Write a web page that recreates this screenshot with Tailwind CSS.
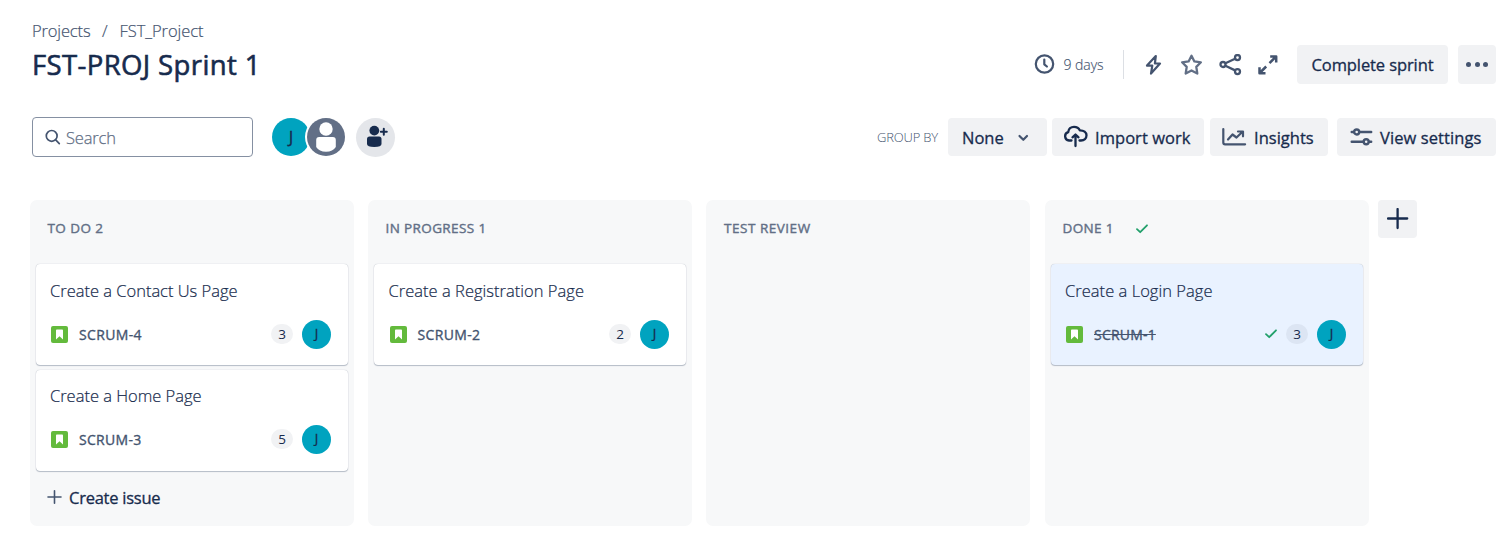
<!DOCTYPE html>
<html lang="en">
<head>
<meta charset="utf-8">
<title>FST-PROJ Sprint 1</title>
<script src="https://cdn.jsdelivr.net/npm/@tailwindcss/browser@4"></script>
</head>
<body class="h-[555px] overflow-hidden bg-white font-['Open_Sans','Noto_Sans',sans-serif] text-[#172b4d]">
<svg class="hidden">
  <symbol id="story" viewBox="0 0 17 17"><rect width="17" height="17" rx="2" fill="#63ba3c"/><path d="M5 4.400a.8.8 0 0 1 .8-.8h5.400a.8.8 0 0 1 .8.8v9.200l-3.500-3.400L5 13.600z" fill="#fff"/></symbol>
  <symbol id="check" viewBox="0 0 12 10"><path d="M1 5.200l3.200 3L11 1.300" fill="none" stroke="#22a06b" stroke-width="1.800" stroke-linecap="round" stroke-linejoin="round"/></symbol>
</svg>

<header class="pl-8 pr-[10px] pt-5">
  <nav class="flex h-[22px] items-center text-[16.5px] font-light leading-[22px] text-[#44546f] [-webkit-text-stroke:0.2px]">
    <a class="w-[70px] tracking-[-0.137px]">Projects</a><span class="w-[17.5px]">/</span><a class="tracking-[-0.057px]">FST_Project</a>
  </nav>
  <div class="mt-[3px] flex h-[39px] items-center justify-between">
    <h1 class="text-[27.5px] leading-[39px] tracking-[0.38px] [-webkit-text-stroke:0.6px]">FST-PROJ Sprint 1</h1>
    <div class="flex items-center text-[#44546f]">
      <svg class="h-[21px] w-[21px]" viewBox="0 0 21 21" fill="none" stroke="currentColor" stroke-width="2.200"><circle cx="10.500" cy="10" r="8.700"/><path d="M10.300 5.500v4.800l2.600 2.200" stroke-linecap="round" stroke-linejoin="round"/></svg>
      <span class="ml-[9px] w-[41px] whitespace-nowrap pt-px text-sm font-light tracking-[-0.055px] [-webkit-text-stroke:0.15px]">9 days</span>
      <span class="ml-[18px] h-[29px] w-px bg-[#dcdfe4]"></span>
      <svg class="ml-[21px] h-[22px] w-[17px]" viewBox="0 0 17 22" fill="none" stroke="currentColor" stroke-width="2.200" stroke-linejoin="round"><path d="M10.800 2L2 11.600h5.300L6 19.600 15 9.500H9.900z"/></svg>
      <svg class="ml-[18px] h-[22px] w-[23px]" viewBox="0 0 23 22" fill="none" stroke="#626f86" stroke-width="2.300" stroke-linejoin="round"><path d="M11.500 1.700l2.900 5.700 6.500.900-4.600 4.600 1 6.600-5.800-3-5.800 3 1-6.600L2.100 8.300l6.500-.900z"/></svg>
      <svg class="ml-[16px] h-[22px] w-[23px]" viewBox="0 0 23 22" fill="none" stroke="currentColor" stroke-width="2.300"><circle cx="4" cy="10.500" r="2.500"/><circle cx="18.500" cy="3.600" r="2.500"/><circle cx="18.500" cy="17.600" r="2.500"/><path d="M6.400 9.300l9.700-4.600M6.400 11.700l9.700 4.700"/></svg>
      <svg class="ml-[15px] h-[22px] w-[22px]" viewBox="0 0 22 22" fill="none" stroke="currentColor" stroke-width="2.500" stroke-linejoin="round"><path d="M13.200 2.400h6v6M19 2.600l-6.500 6.500M8.500 19.200h-6v-6M2.700 19l6.500-6.500"/></svg>
      <button class="ml-[18.500px] h-[39px] w-[151px] rounded-[4px] bg-[#f1f2f4] pt-px text-[16.5px] tracking-[-0.095px] text-[#172b4d] [-webkit-text-stroke:0.3px]">Complete sprint</button>
      <button class="ml-[10px] flex h-[39px] w-[38px] items-center justify-center gap-[3.500px] rounded-[4px] bg-[#f1f2f4]"><i class="size-[5px] rounded-full bg-[#44546f]"></i><i class="size-[5px] rounded-full bg-[#44546f]"></i><i class="size-[5px] rounded-full bg-[#44546f]"></i></button>
    </div>
  </div>
</header>

<section class="mt-[33px] flex h-10 items-center justify-between pl-8 pr-[10px]">
  <div class="flex items-center">
    <label class="flex h-10 w-[221px] items-center rounded-[4px] border border-[#8590a2] pl-3">
      <svg class="size-4 text-[#44546f]" viewBox="0 0 16 16" fill="none" stroke="currentColor" stroke-width="1.700" stroke-linecap="round"><circle cx="6.700" cy="6.900" r="5.400"/><path d="M10.700 10.900l3.600 3.700"/></svg>
      <span class="ml-[5px] pt-[2px] text-[16.5px] font-light tracking-[-0.170px] text-[#626f86] [-webkit-text-stroke:0.25px]">Search</span>
    </label>
    <span class="ml-[19px] flex size-[38px] items-center justify-center rounded-full bg-[#00a3bf] text-[17px] [-webkit-text-stroke:0.3px]">J</span>
    <svg class="-ml-[5px] size-[42px]" viewBox="0 0 42 42"><circle cx="21" cy="21" r="21" fill="#fff"/><circle cx="21" cy="21" r="19" fill="#626f86"/><circle cx="21" cy="13" r="6.700" fill="#fff"/><path d="M11.200 24q0-3 3-3h13.600q3 0 3 3V31q-3 4.800-9.800 4.800t-9.800-4.800z" fill="#fff"/></svg>
    <span class="ml-[9px] flex size-[39px] items-center justify-center rounded-full bg-[#e4e6ea]"><svg class="h-[24px] w-[24px]" viewBox="0 0 24 24" fill="#172b4d"><circle cx="10.300" cy="5.600" r="4.900"/><path d="M3 14q0-2.500 2.500-2.500h9.500q2.500 0 2.500 2.500v5q0 3-7.250 3T3 19z"/><path d="M19.800 3.800v6M16.800 6.800h6" stroke="#172b4d" stroke-width="2" stroke-linecap="round"/></svg></span>
  </div>
  <div class="flex items-center text-[16.5px]">
    <span class="w-[71px] pt-px text-[13px] font-light tracking-[-0.176px] text-[#44546f]">GROUP BY</span>
    <button class="flex h-[38px] w-[99px] items-center rounded-[4px] bg-[#f1f2f4] pl-[14px]"><span class="w-[55px] pt-[2px] text-left [-webkit-text-stroke:0.3px]">None</span><svg class="mt-px h-[8px] w-[12px]" viewBox="0 0 12 8" fill="none" stroke="#44546f" stroke-width="2.200" stroke-linecap="round" stroke-linejoin="round"><path d="M2.500 2L6.300 5.800 10 2"/></svg></button>
    <button class="ml-[5px] flex h-[38px] w-[152px] items-center rounded-[4px] bg-[#f1f2f4] pl-[11px]"><svg class="mr-[7px] h-[24px] w-[25px]" viewBox="0 0 25 24" fill="none" stroke="#172b4d" stroke-width="2.300" stroke-linecap="round" stroke-linejoin="round"><path d="M8.500 15.500H6a4.300 4.300 0 0 1-.8-8.400C5.500 3.800 8 1.800 11 1.800c2.700 0 4.800 1.300 5.800 3.500 4-.1 6.700 1.900 6.700 5 0 3.100-2.300 5.200-5.500 5.200h-1.500M12.500 21V10M9.500 12.300l3-2.800 3 2.800"/></svg><span class="pt-[2px] tracking-[0.050px] [-webkit-text-stroke:0.3px]">Import work</span></button>
    <button class="ml-[6px] flex h-[38px] w-[118px] items-center rounded-[4px] bg-[#f1f2f4] pl-[12px]"><svg class="mr-[7px] h-[20px] w-[25px]" viewBox="0 0 25 20" fill="none" stroke="#44546f" stroke-width="2.200" stroke-linecap="round" stroke-linejoin="round"><path d="M1.300 2v13.500q0 1.800 1.800 1.800h20"/><path d="M6 12.500l4.500-5 4 3 6-5.800M16 4.500h5v4.800"/></svg><span class="pt-[2px] tracking-[0.020px] [-webkit-text-stroke:0.3px]">Insights</span></button>
    <button class="ml-[9px] flex h-[38px] w-[159px] items-center rounded-[4px] bg-[#f1f2f4] pl-[12px]"><svg class="mr-[7px] h-[20px] w-[24px]" viewBox="0 0 24 20" fill="none" stroke="#44546f" stroke-width="2.400" stroke-linecap="round"><path d="M2.700 5h2M10.500 5h11.700M2.700 14.700h11.300M20 14.700h2.200"/><circle cx="7.700" cy="5" r="2.500"/><circle cx="17.200" cy="14.700" r="2.500"/></svg><span class="pt-[2px] tracking-[0.089px] [-webkit-text-stroke:0.3px]">View settings</span></button>
  </div>
</section>

<main class="mt-[43px] flex pl-[30px]">
  <section class="h-[326px] w-[324px] rounded-[7px] bg-[#f7f8f9] px-[6px]">
    <h2 class="flex h-16 items-center pb-[7px] pl-[11.500px] text-[13.5px] tracking-[0.433px] text-[#626f86] [-webkit-text-stroke:0.4px]">TO DO 2</h2>
    <article class="h-[101px] rounded-[4px] bg-white pl-[14px] pr-[17px] pt-[15px] shadow-[0_1px_1px_#091e4240,0_0_1px_#091e424f]">
      <p class="h-6 text-[16.5px] font-light leading-6 tracking-[-0.012px] [-webkit-text-stroke:0.2px]">Create a Contact Us Page</p>
      <div class="mt-4 flex h-[30px] items-center"><svg class="ml-px size-[17px]"><use href="#story"/></svg><span class="ml-[11px] pt-[2px] text-sm tracking-[0.364px] text-[#44546f] [-webkit-text-stroke:0.35px]">SCRUM-4</span><span class="ml-auto flex h-5 w-[22px] items-center justify-center rounded-full bg-[#f1f2f4] pt-px text-[13.5px]">3</span><span class="ml-[9px] flex size-[29px] items-center justify-center rounded-full bg-[#00a3bf] text-[13px] [-webkit-text-stroke:0.3px]">J</span></div>
    </article>
    <article class="mt-[5px] h-[101px] rounded-[4px] bg-white pl-[14px] pr-[17px] pt-[14px] shadow-[0_1px_1px_#091e4240,0_0_1px_#091e424f]">
      <p class="h-6 text-[16.5px] font-light leading-6 tracking-[-0.021px] [-webkit-text-stroke:0.2px]">Create a Home Page</p>
      <div class="mt-4 flex h-[30px] items-center"><svg class="ml-px size-[17px]"><use href="#story"/></svg><span class="ml-[11px] pt-[2px] text-sm tracking-[0.3px] text-[#44546f] [-webkit-text-stroke:0.35px]">SCRUM-3</span><span class="ml-auto flex h-5 w-[22px] items-center justify-center rounded-full bg-[#f1f2f4] pt-px text-[13.5px]">5</span><span class="ml-[9px] flex size-[29px] items-center justify-center rounded-full bg-[#00a3bf] text-[13px] [-webkit-text-stroke:0.3px]">J</span></div>
    </article>
    <button class="mt-[14px] flex h-6 items-center pl-[11px] text-[16.5px] leading-6"><svg class="mr-[7px] size-[15px]" viewBox="0 0 15 15" fill="none" stroke="#44546f" stroke-width="1.600" stroke-linecap="round"><path d="M7.500 .8v12.500M1 7h13"/></svg><span class="pt-[2px] tracking-[-0.250px] [-webkit-text-stroke:0.3px]">Create issue</span></button>
  </section>

  <section class="ml-[14px] h-[326px] w-[324px] rounded-[7px] bg-[#f7f8f9] px-[6px]">
    <h2 class="flex h-16 items-center pb-[7px] pl-[11.500px] text-[13.5px] tracking-[0.379px] text-[#626f86] [-webkit-text-stroke:0.4px]">IN PROGRESS 1</h2>
    <article class="h-[101px] rounded-[4px] bg-white pl-[14.500px] pr-[17px] pt-[15px] shadow-[0_1px_1px_#091e4240,0_0_1px_#091e424f]">
      <p class="h-6 text-[16.5px] font-light leading-6 tracking-[0.023px] [-webkit-text-stroke:0.2px]">Create a Registration Page</p>
      <div class="mt-4 flex h-[30px] items-center"><svg class="ml-px size-[17px]"><use href="#story"/></svg><span class="ml-[11px] pt-[2px] text-sm tracking-[0.364px] text-[#44546f] [-webkit-text-stroke:0.35px]">SCRUM-2</span><span class="ml-auto flex h-5 w-[22px] items-center justify-center rounded-full bg-[#f1f2f4] pt-px text-[13.5px]">2</span><span class="ml-[9px] flex size-[29px] items-center justify-center rounded-full bg-[#00a3bf] text-[13px] [-webkit-text-stroke:0.3px]">J</span></div>
    </article>
  </section>

  <section class="ml-[14px] h-[326px] w-[324px] rounded-[7px] bg-[#f7f8f9] px-[6px]">
    <h2 class="flex h-16 items-center pb-[7px] pl-[12px] text-[13.5px] tracking-[0.520px] text-[#626f86] [-webkit-text-stroke:0.4px]">TEST REVIEW</h2>
  </section>

  <section class="ml-[15px] h-[326px] w-[324px] rounded-[7px] bg-[#f7f8f9] px-[6px]">
    <h2 class="flex h-16 items-center pb-[7px] pl-[11.500px] text-[13.5px] tracking-[0.350px] text-[#626f86] [-webkit-text-stroke:0.4px]">DONE 1<svg class="ml-[22px] mt-px h-[10px] w-[12px]"><use href="#check"/></svg></h2>
    <article class="h-[101px] rounded-[4px] bg-[#e9f2ff] pl-[14px] pr-[17px] pt-[15px] shadow-[0_1px_1px_#091e4240,0_0_1px_#091e424f]">
      <p class="h-6 text-[16.5px] font-light leading-6 tracking-[0.034px] [-webkit-text-stroke:0.2px]">Create a Login Page</p>
      <div class="mt-4 flex h-[30px] items-center"><svg class="ml-px size-[17px]"><use href="#story"/></svg><span class="ml-[11px] pt-[2px] text-sm tracking-[0.200px] text-[#44546f] line-through [-webkit-text-stroke:0.35px]">SCRUM-1</span><svg class="ml-auto h-[10px] w-[12px]"><use href="#check"/></svg><span class="ml-[9px] flex h-5 w-[22px] items-center justify-center rounded-full bg-[#dce5f3] pt-px text-[13.5px]">3</span><span class="ml-[9px] flex size-[29px] items-center justify-center rounded-full bg-[#00a3bf] text-[13px] [-webkit-text-stroke:0.3px]">J</span></div>
    </article>
  </section>

  <button class="ml-[9px] flex h-[38px] w-[39px] items-center justify-center rounded-[4px] bg-[#f1f2f4]"><svg class="size-[22px]" viewBox="0 0 22 22" fill="none" stroke="#172b4d" stroke-width="2.300" stroke-linecap="round"><path d="M10.600 1v19M1 10.500h19.200"/></svg></button>
</main>
</body>
</html>
